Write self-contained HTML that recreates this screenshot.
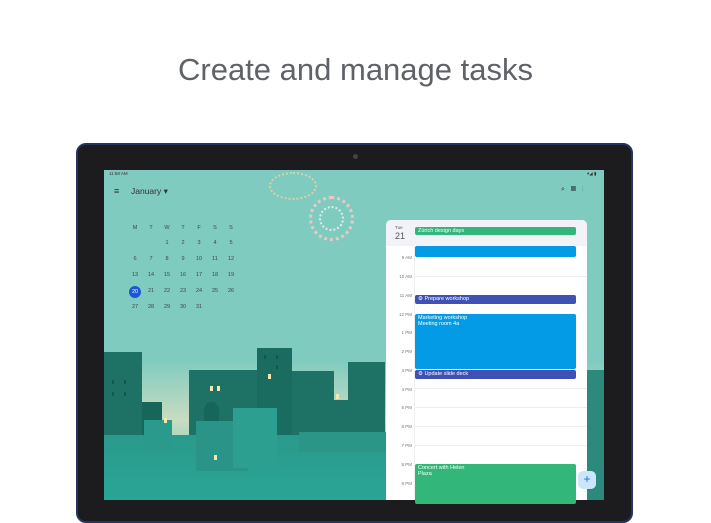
<!DOCTYPE html>
<html><head><style>
*{margin:0;padding:0;box-sizing:border-box}
body{width:711px;height:500px;background:#fff;position:relative;overflow:hidden;font-family:"Liberation Sans",sans-serif}
.a{position:absolute}
.ev{position:absolute;left:415px;width:161px;border-radius:2px;color:#fff;font-size:5.5px;padding:1px 3px;line-height:6px}
.hr{position:absolute;left:390px;width:22px;text-align:right;font-size:4.5px;color:#777}
.ln{position:absolute;left:415px;width:172px;height:1px;background:#eee}
.d{position:absolute;font-size:5.5px;color:#444;width:12px;text-align:center}
.b{position:absolute;background:#1e7165}
.w{position:absolute;width:2px;height:4px;background:#14584d}
.y{position:absolute;width:3px;height:5px;background:#f7e6b0}
</style></head><body>
<div class="a" style="left:0;top:52px;width:711px;text-align:center;font-size:31px;color:#5f6368">Create and manage tasks</div>
<div class="a" style="left:76px;top:143px;width:557px;height:380px;background:#1c1c1f;border:2px solid #26345e;border-radius:10px"></div>
<div class="a" style="left:353px;top:154px;width:5px;height:5px;border-radius:50%;background:#444"></div>
<div class="a" style="left:104px;top:170px;width:500px;height:330px;background:linear-gradient(#7fcbbf 0,#7fcbbf 190px,#c9dcc0 250px,#7fcbbf 300px);overflow:hidden">
  <div class="a" style="left:165px;top:2px;width:48px;height:28px;border-radius:50%;border:2px dotted #f3d3a0;opacity:.8"></div>
  <div class="a" style="left:205px;top:26px;width:45px;height:45px;border-radius:50%;border:3px dotted #f5c9c9;opacity:.9"></div>
  <div class="a" style="left:215px;top:36px;width:25px;height:25px;border-radius:50%;border:2px dotted #fff;opacity:.7"></div>
  <!-- skyline (screen-local coords) -->
  <div class="b" style="left:0;top:182px;width:38px;height:150px"></div>
  <div class="b" style="left:38px;top:232px;width:20px;height:100px;background:#17665a"></div>
  <div class="b" style="left:85px;top:200px;width:80px;height:130px"></div>
  <div class="b" style="left:100px;top:232px;width:15px;height:100px;background:#17665a;border-radius:8px 8px 0 0"></div>
  <div class="b" style="left:153px;top:178px;width:35px;height:150px;background:#1b6c60"></div>
  <div class="b" style="left:188px;top:201px;width:42px;height:130px"></div>
  <div class="b" style="left:230px;top:230px;width:15px;height:100px"></div>
  <div class="b" style="left:244px;top:192px;width:37px;height:140px"></div>
  <div class="b" style="left:483px;top:200px;width:17px;height:130px;background:#2c8a7c"></div>
  <div class="b" style="left:92px;top:251px;width:52px;height:80px;background:#2a9286"></div>
  <div class="b" style="left:129px;top:238px;width:44px;height:90px;background:#2c9d8f"></div>
  <div class="b" style="left:0;top:270px;width:40px;height:15px;background:#18655a"></div>
  <div class="b" style="left:0;top:265px;width:290px;height:70px;background:linear-gradient(#2a9a8c,#2aa597)"></div>
  <div class="b" style="left:40px;top:250px;width:28px;height:30px;background:#2a9a8c"></div>
  <div class="b" style="left:92px;top:251px;width:52px;height:50px;background:#2b9488"></div>
  <div class="b" style="left:129px;top:238px;width:44px;height:60px;background:#2c9f90"></div>
  <div class="b" style="left:195px;top:262px;width:90px;height:20px;background:#2b9588"></div>
  <div class="y" style="left:106px;top:216px"></div><div class="y" style="left:113px;top:216px"></div>
  <div class="y" style="left:110px;top:285px"></div><div class="y" style="left:60px;top:248px"></div>
  <div class="y" style="left:164px;top:204px"></div><div class="y" style="left:232px;top:224px"></div>
  <div class="w" style="left:8px;top:210px"></div><div class="w" style="left:20px;top:210px"></div><div class="w" style="left:8px;top:222px"></div><div class="w" style="left:20px;top:222px"></div>
  <div class="w" style="left:160px;top:185px"></div><div class="w" style="left:172px;top:185px"></div><div class="w" style="left:172px;top:195px"></div>
</div>
<div class="a" style="left:109px;top:171px;font-size:4.5px;color:#333">11:58 AM</div>
<div class="a" style="left:587px;top:171px;font-size:4.5px;color:#333">▾◢ ▮</div>
<div class="a" style="left:114px;top:186px;font-size:9px;color:#333">≡</div>
<div class="a" style="left:131px;top:186px;font-size:8.5px;color:#333">January ▾</div>
<div class="a" style="left:561px;top:186px;font-size:7px;color:#333">⌕ &nbsp; ▦ &nbsp; ⋮</div>
<div class="a" style="left:386px;top:220px;width:201px;height:280px;background:#fff;border-radius:5px 5px 0 0;overflow:hidden">
  <div class="a" style="left:0;top:0;width:201px;height:26px;background:#f1f3f8"></div>
  <div class="a" style="left:28px;top:26px;width:1px;height:260px;background:#eee"></div>
</div>
<div class="a" style="left:395px;top:225px;font-size:4.5px;color:#555">Tue</div>
<div class="a" style="left:395px;top:231px;font-size:9px;color:#555">21</div>
<div class="ev" style="top:227px;height:8px;background:#33b679">Zürich design days</div>
<div class="ev" style="top:246px;height:11px;background:#039be5"></div>
<div class="ev" style="top:295px;height:9px;background:#3f51b5">⚙ Prepare workshop</div>
<div class="ev" style="top:314px;height:55px;background:#039be5">Marketing workshop<br>Meeting room 4a</div>
<div class="ev" style="top:370px;height:9px;background:#3f51b5">⚙ Update slide deck</div>
<div class="ev" style="top:464px;height:40px;background:#33b679">Concert with Helen<br>Plaza</div>
<div class="a" style="left:578px;top:471px;width:18px;height:18px;border-radius:5px;background:#c9e6fb;color:#1a73e8;font-size:12px;text-align:center;line-height:17px">+</div>
<div class="hr" style="top:255px">9 AM</div><div class="hr" style="top:274px">10 AM</div><div class="hr" style="top:293px">11 AM</div><div class="hr" style="top:312px">12 PM</div><div class="hr" style="top:330px">1 PM</div><div class="hr" style="top:349px">2 PM</div><div class="hr" style="top:368px">3 PM</div><div class="hr" style="top:387px">4 PM</div><div class="hr" style="top:405px">5 PM</div><div class="hr" style="top:424px">6 PM</div><div class="hr" style="top:443px">7 PM</div><div class="hr" style="top:462px">8 PM</div><div class="hr" style="top:481px">9 PM</div>
<div class="ln" style="top:276px"></div><div class="ln" style="top:388px"></div><div class="ln" style="top:407px"></div><div class="ln" style="top:426px"></div><div class="ln" style="top:445px"></div>
<div class="d" style="left:129px;top:225px">M</div><div class="d" style="left:145px;top:225px">T</div><div class="d" style="left:161px;top:225px">W</div><div class="d" style="left:177px;top:225px">T</div><div class="d" style="left:193px;top:225px">F</div><div class="d" style="left:209px;top:225px">S</div><div class="d" style="left:225px;top:225px">S</div>
<div class="d" style="left:161px;top:240px">1</div><div class="d" style="left:177px;top:240px">2</div><div class="d" style="left:193px;top:240px">3</div><div class="d" style="left:209px;top:240px">4</div><div class="d" style="left:225px;top:240px">5</div>
<div class="d" style="left:129px;top:256px">6</div><div class="d" style="left:145px;top:256px">7</div><div class="d" style="left:161px;top:256px">8</div><div class="d" style="left:177px;top:256px">9</div><div class="d" style="left:193px;top:256px">10</div><div class="d" style="left:209px;top:256px">11</div><div class="d" style="left:225px;top:256px">12</div>
<div class="d" style="left:129px;top:272px">13</div><div class="d" style="left:145px;top:272px">14</div><div class="d" style="left:161px;top:272px">15</div><div class="d" style="left:177px;top:272px">16</div><div class="d" style="left:193px;top:272px">17</div><div class="d" style="left:209px;top:272px">18</div><div class="d" style="left:225px;top:272px">19</div>
<div class="a" style="left:129px;top:286px;width:12px;height:12px;border-radius:50%;background:#1a56d6;color:#fff;font-size:5.5px;text-align:center;line-height:12px">20</div>
<div class="d" style="left:145px;top:288px">21</div><div class="d" style="left:161px;top:288px">22</div><div class="d" style="left:177px;top:288px">23</div><div class="d" style="left:193px;top:288px">24</div><div class="d" style="left:209px;top:288px">25</div><div class="d" style="left:225px;top:288px">26</div>
<div class="d" style="left:129px;top:304px">27</div><div class="d" style="left:145px;top:304px">28</div><div class="d" style="left:161px;top:304px">29</div><div class="d" style="left:177px;top:304px">30</div><div class="d" style="left:193px;top:304px">31</div>
</body></html>
